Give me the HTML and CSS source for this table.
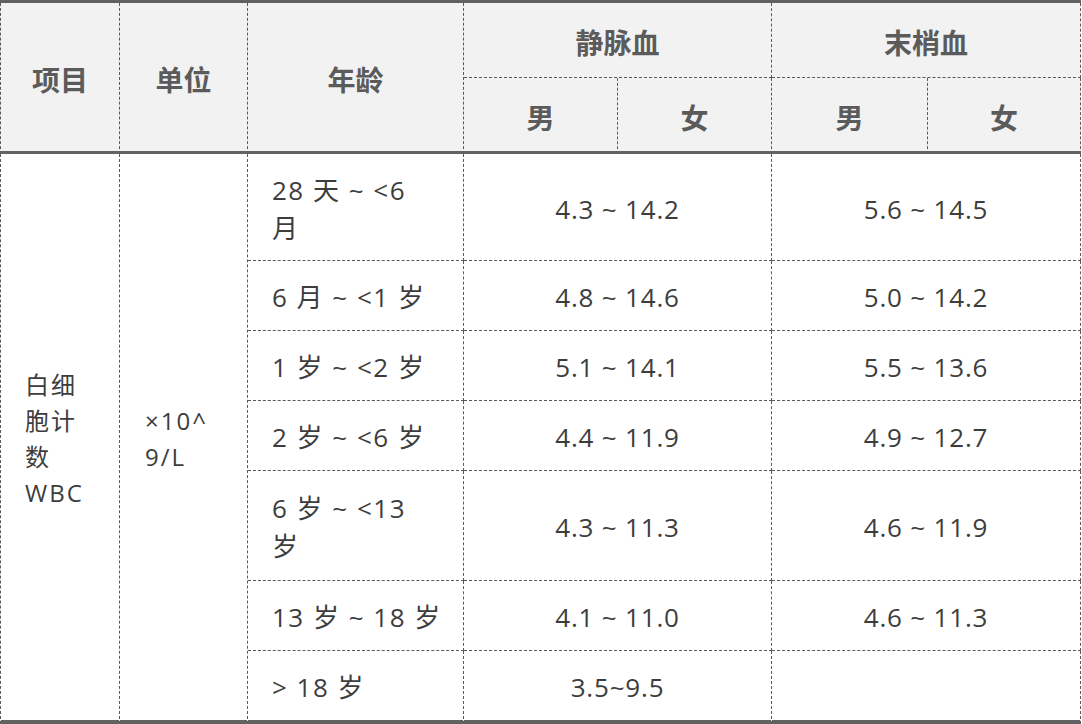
FILE: index.html
```html
<!DOCTYPE html>
<html lang="zh-CN">
<head>
<meta charset="utf-8">
<title>白细胞计数参考区间</title>
<link rel="stylesheet" href="styles.css">
</head>
<body>
<table class="ref">
  <colgroup>
    <col class="c-item"><col class="c-unit"><col class="c-age">
    <col class="c-v"><col class="c-v"><col class="c-p"><col class="c-p2">
  </colgroup>
  <thead>
    <tr class="h1">
      <th rowspan="2" class="first last-head">项目</th>
      <th rowspan="2" class="last-head">单位</th>
      <th rowspan="2" class="last-head">年龄</th>
      <th colspan="2">静脉血</th>
      <th colspan="2">末梢血</th>
    </tr>
    <tr class="h2">
      <th class="last-head">男</th>
      <th class="last-head">女</th>
      <th class="last-head">男</th>
      <th class="last-head">女</th>
    </tr>
  </thead>
  <tbody>
    <tr class="r-tall">
      <td rowspan="7" class="first item bottom">白细<br>胞计<br>数<br>WBC</td>
      <td rowspan="7" class="unit bottom">×10^<br>9/L</td>
      <td class="age">28 天 ~ &lt;6<br>月</td>
      <td colspan="2" class="val">4.3 ~ 14.2</td>
      <td colspan="2" class="val">5.6 ~ 14.5</td>
    </tr>
    <tr class="r-norm">
      <td class="age">6 月 ~ &lt;1 岁</td>
      <td colspan="2" class="val">4.8 ~ 14.6</td>
      <td colspan="2" class="val">5.0 ~ 14.2</td>
    </tr>
    <tr class="r-norm">
      <td class="age">1 岁 ~ &lt;2 岁</td>
      <td colspan="2" class="val">5.1 ~ 14.1</td>
      <td colspan="2" class="val">5.5 ~ 13.6</td>
    </tr>
    <tr class="r-norm">
      <td class="age">2 岁 ~ &lt;6 岁</td>
      <td colspan="2" class="val">4.4 ~ 11.9</td>
      <td colspan="2" class="val">4.9 ~ 12.7</td>
    </tr>
    <tr class="r-tall2">
      <td class="age">6 岁 ~ &lt;13<br>岁</td>
      <td colspan="2" class="val">4.3 ~ 11.3</td>
      <td colspan="2" class="val">4.6 ~ 11.9</td>
    </tr>
    <tr class="r-norm">
      <td class="age">13 岁 ~ 18 岁</td>
      <td colspan="2" class="val">4.1 ~ 11.0</td>
      <td colspan="2" class="val">4.6 ~ 11.3</td>
    </tr>
    <tr class="r-last">
      <td class="age bottom">&gt; 18 岁</td>
      <td colspan="2" class="val bottom">3.5~9.5</td>
      <td colspan="2" class="val bottom"></td>
    </tr>
  </tbody>
</table>
</body>
</html>
```

FILE: styles.css
```css
html, body {
  margin: 0;
  padding: 0;
  background: #ffffff;
}

.ref {
  border-collapse: separate;
  border-spacing: 0;
  table-layout: fixed;
  width: 1081px;
  border-top: 3px solid #626262;
  font-family: "Open Sans", "Noto Sans CJK SC", sans-serif;
}

.c-item { width: 120px; }
.c-unit { width: 128px; }
.c-age { width: 216px; }
.c-v { width: 154px; }
.c-p { width: 156px; }
.c-p2 { width: 153px; }

.ref th,
.ref td {
  border-right: 1px dashed #5a5a5a;
  border-bottom: 1px dashed #5a5a5a;
  padding: 0;
}

.ref .first {
  border-left: 1px dashed #5a5a5a;
}

.ref th {
  background: #f2f2f2;
  color: #5b5b5b;
  font-family: "Noto Sans CJK SC", sans-serif;
  font-size: 28px;
  font-weight: 700;
  text-align: center;
  vertical-align: middle;
  line-height: 36px;
  padding-top: 4px;
}

.ref th.last-head {
  border-bottom: 3px solid #626262;
}

.h1 { height: 75px; }
.h2 { height: 76px; }

.r-tall { height: 107px; }
.r-norm { height: 70px; }
.r-tall2 { height: 110px; }
.r-last { height: 73px; }

.ref td.bottom {
  border-bottom: 4px solid #626262;
}

.ref td {
  vertical-align: middle;
  color: #3d3d3d;
  font-size: 26px;
  line-height: 38px;
  padding-top: 3px;
}

.item {
  color: #606060;
  font-size: 24px !important;
  line-height: 36px !important;
  letter-spacing: 2px;
  padding-left: 24px !important;
  text-align: left;
}

.unit {
  color: #4a4a4a;
  font-size: 24px !important;
  line-height: 36px !important;
  letter-spacing: 2px;
  padding-left: 25px !important;
  text-align: left;
}

.age {
  padding-left: 24px !important;
  text-align: left;
  letter-spacing: 1.5px;
}

.val {
  text-align: center;
  letter-spacing: 0.8px;
}
```
